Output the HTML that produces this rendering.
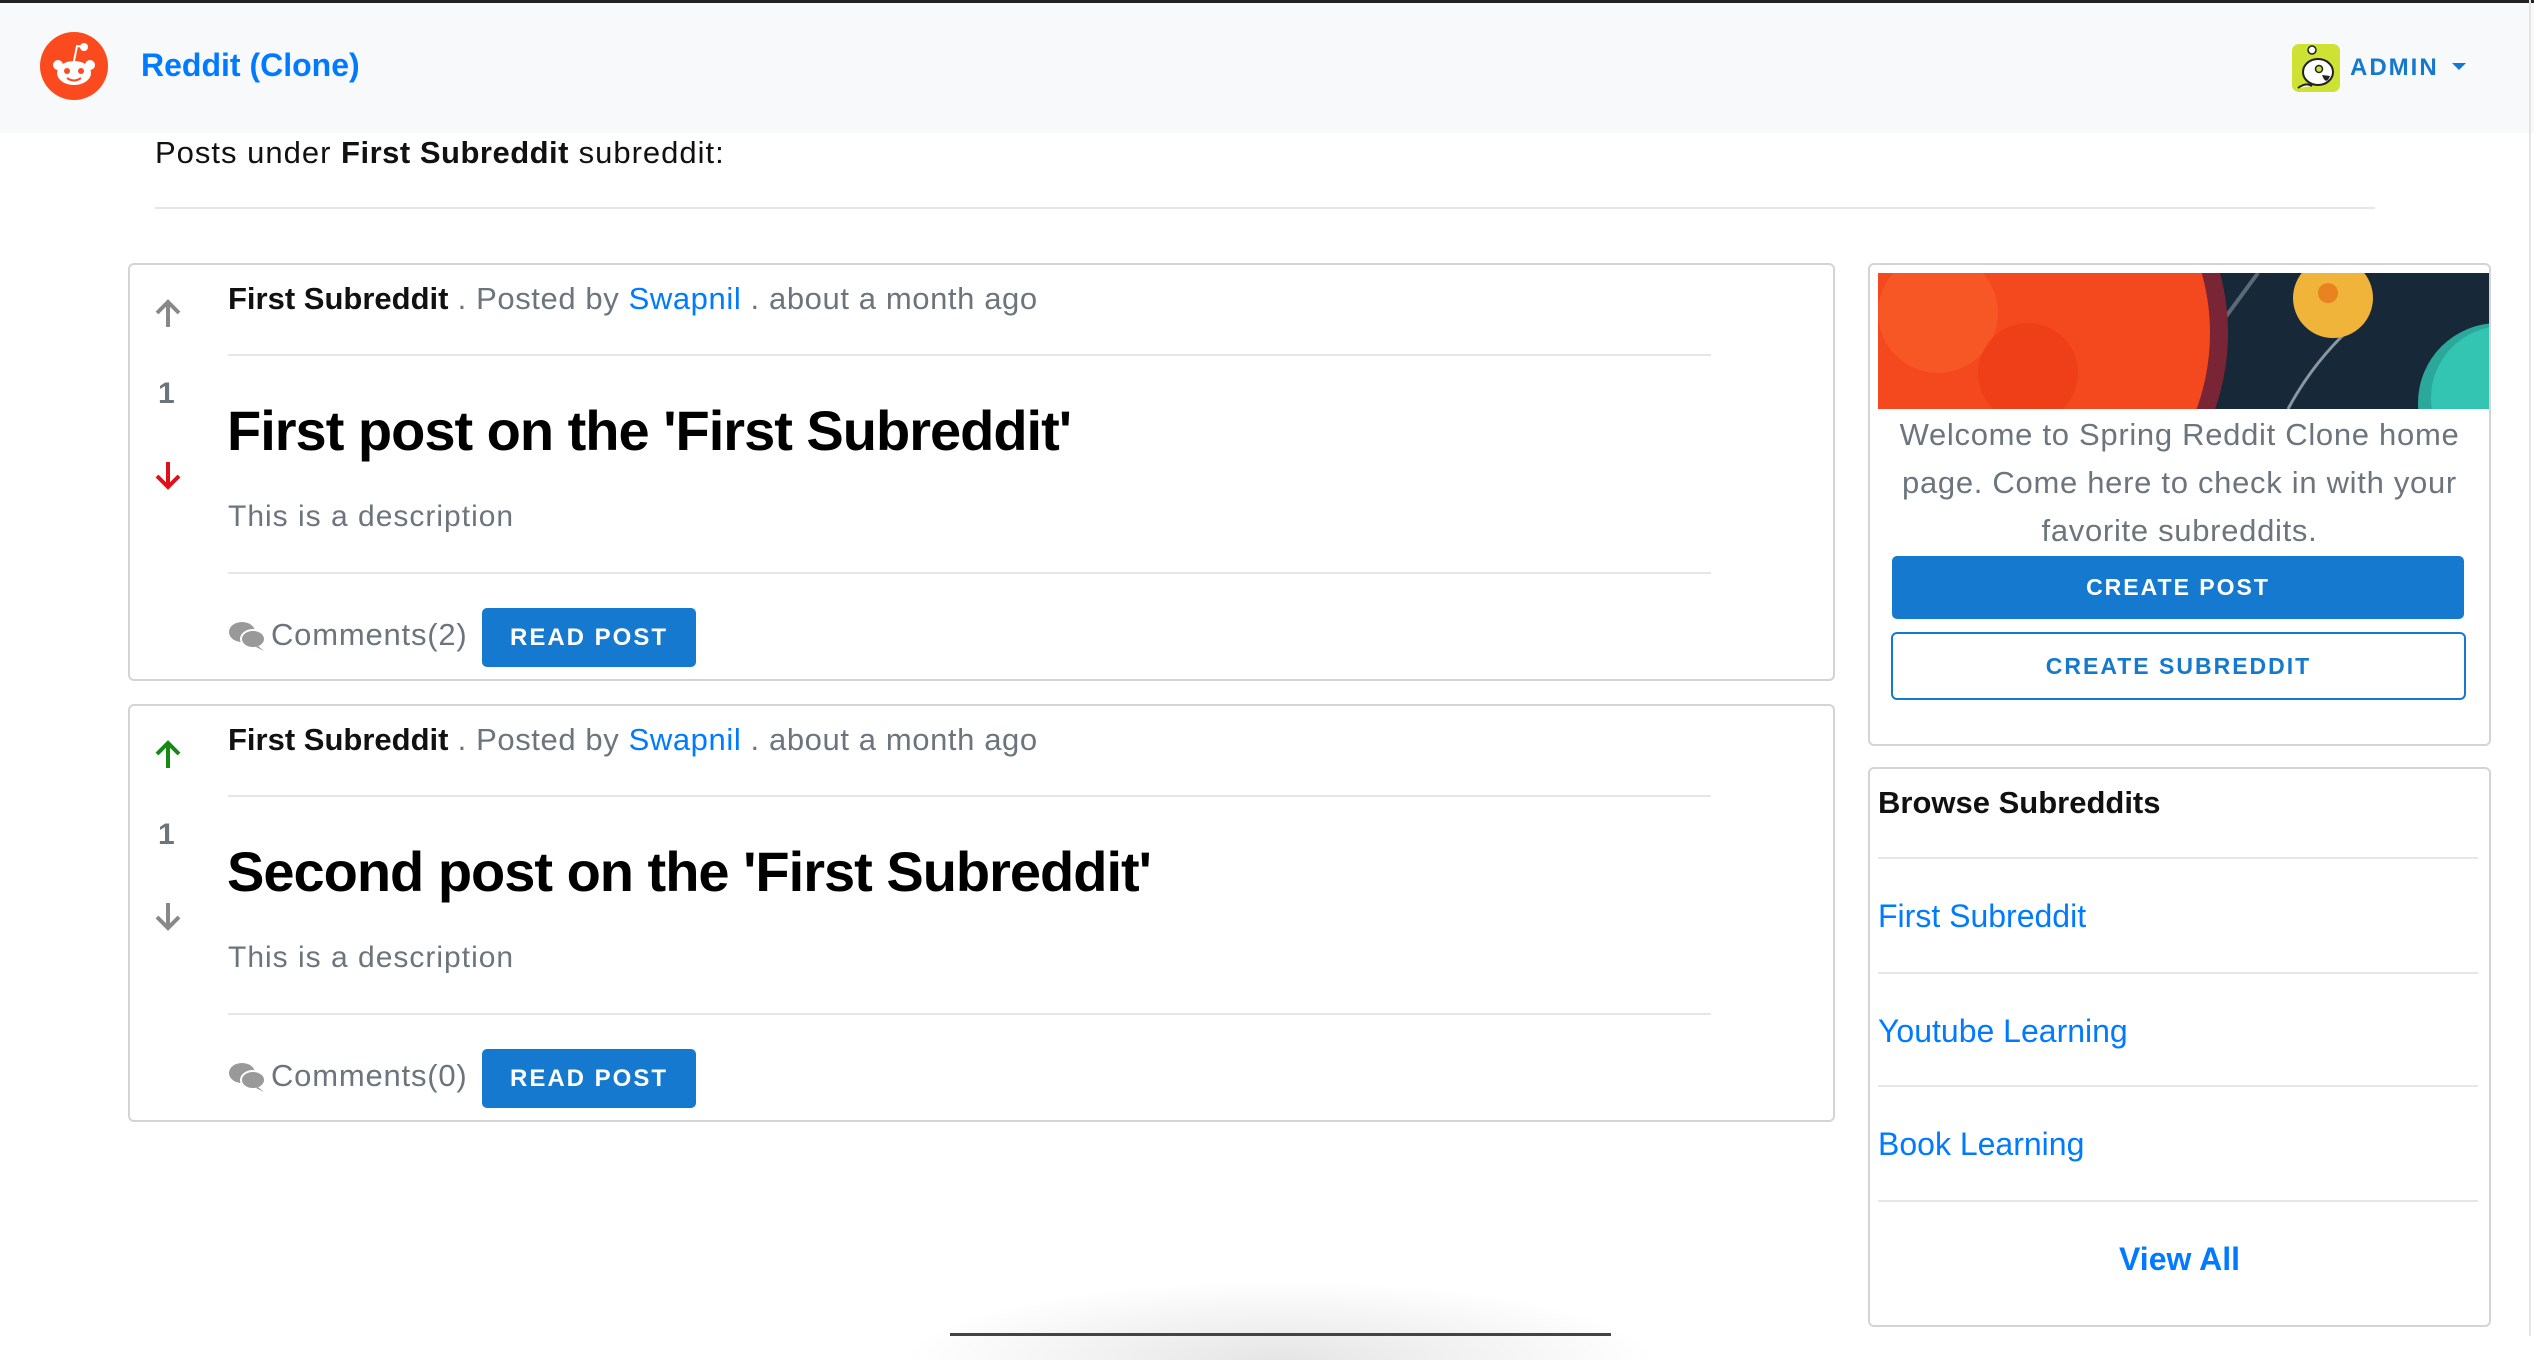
<!DOCTYPE html>
<html><head><meta charset="utf-8"><style>
*{margin:0;padding:0;box-sizing:border-box}
body{width:2534px;height:1336px;overflow:hidden;background:#fff;font-family:"Liberation Sans",Arial,sans-serif;position:relative}
.a{position:absolute;white-space:nowrap}
.nav{left:0;top:0;width:2534px;height:133px;background:#f8f9fa;border-top:3px solid #222}
.card{border:2px solid #d4d4d4;border-radius:6px;background:#fff}
.hr{height:2px;background:#e6e6e6}
.meta{font-size:31px;line-height:40px;color:#6c757d;letter-spacing:0.6px}
.meta b{color:#111;letter-spacing:0}
.blue{color:#007bff}
.title{font-size:56px;font-weight:bold;color:#000;line-height:64px;letter-spacing:-1px}
.desc{font-size:30px;line-height:40px;color:#6c757d;letter-spacing:1px}
.btn{background:#1479cf;color:#fff;font-weight:bold;font-size:24px;letter-spacing:2px;border-radius:5px;text-align:center}
.cm{font-size:31px;line-height:40px;color:#6c757d;letter-spacing:0.8px}
.link{font-size:32px;line-height:40px;color:#007bff}
.vote{font-size:30px;line-height:36px;color:#6c757d;font-weight:bold}
</style></head><body>
<div class="a nav"></div>
<svg class="a" style="left:40px;top:32px" width="68" height="68" viewBox="0 0 68 68">
<circle cx="34" cy="34" r="34" fill="#fb4b1e"/>
<ellipse cx="34" cy="41" rx="17" ry="12" fill="#fff"/>
<circle cx="18" cy="33" r="5" fill="#fff"/><circle cx="50" cy="33" r="5" fill="#fff"/>
<circle cx="44" cy="15" r="4" fill="#fff"/>
<path d="M34 29 L37 14 L44 15" stroke="#fff" stroke-width="2" fill="none"/>
<circle cx="27" cy="39" r="3" fill="#fb4b1e"/><circle cx="41" cy="39" r="3" fill="#fb4b1e"/>
<path d="M27 46 Q34 51 41 46" stroke="#fb4b1e" stroke-width="2" fill="none"/>
</svg>
<div class="a" style="left:141px;top:45px;font-size:32px;line-height:40px;font-weight:bold;color:#007bff">Reddit (Clone)</div>
<svg class="a" style="left:2292px;top:44px" width="48" height="48" viewBox="0 0 48 48">
<rect width="48" height="48" rx="7" fill="#cee234"/>
<ellipse cx="26" cy="28" rx="15" ry="13" fill="#fff" stroke="#222" stroke-width="2"/>
<circle cx="20" cy="6" r="4" fill="#fff" stroke="#222" stroke-width="1.5"/>
<circle cx="27" cy="25" r="3.5" fill="#cee234" stroke="#222" stroke-width="1.5"/>
<path d="M30 31 Q34 42 38 32 Z" fill="#222"/>
<path d="M6 44 Q14 38 20 42" stroke="#222" stroke-width="2" fill="#fff"/>
</svg>
<div class="a" style="left:2350px;top:52px;font-size:24px;line-height:32px;font-weight:bold;color:#1479cf;letter-spacing:2px">ADMIN</div>
<div class="a" style="left:2452px;top:63px;width:0;height:0;border-left:7px solid transparent;border-right:7px solid transparent;border-top:7px solid #1479cf"></div>
<div class="a" style="left:2529px;top:0;width:2px;height:1336px;background:#e4e4e4"></div>

<div class="a" style="left:155px;top:135px;font-size:31px;line-height:36px;color:#111;letter-spacing:1px">Posts under <b style="letter-spacing:0.5px">First Subreddit</b> subreddit:</div>
<div class="a hr" style="left:155px;top:207px;width:2220px"></div>

<!-- post 1 -->
<div class="a card" style="left:128px;top:263px;width:1707px;height:418px"></div>
<svg class="a" style="left:154px;top:299px" width="28" height="30" viewBox="0 0 28 30"><path d="M14 28 V3 M3 14 L14 3 L25 14" stroke="#888" stroke-width="4" fill="none"/></svg>
<div class="a vote" style="left:158px;top:376px">1</div>
<svg class="a" style="left:154px;top:460px" width="28" height="30" viewBox="0 0 28 30"><path d="M14 2 V27 M3 16 L14 27 L25 16" stroke="#e0101a" stroke-width="4" fill="none"/></svg>
<div class="a meta" style="left:228px;top:279px"><b>First Subreddit</b> . Posted by <span class="blue">Swapnil</span> . about a month ago</div>
<div class="a hr" style="left:228px;top:354px;width:1483px"></div>
<div class="a title" style="left:227px;top:399px">First post on the 'First Subreddit'</div>
<div class="a desc" style="left:228px;top:497px">This is a description</div>
<div class="a hr" style="left:228px;top:572px;width:1483px"></div>
<svg class="a" style="left:228px;top:620px" width="38" height="32" viewBox="0 0 38 32"><ellipse cx="14" cy="12" rx="13" ry="10" fill="#999"/><ellipse cx="25" cy="19" rx="12" ry="9" fill="#999" stroke="#fff" stroke-width="2"/><path d="M30 26 L36 31 L28 27Z" fill="#999"/></svg>
<div class="a cm" style="left:271px;top:615px">Comments(2)</div>
<div class="a btn" style="left:482px;top:608px;width:214px;height:59px;line-height:59px">READ POST</div>

<!-- post 2 -->
<div class="a card" style="left:128px;top:704px;width:1707px;height:418px"></div>
<svg class="a" style="left:154px;top:740px" width="28" height="30" viewBox="0 0 28 30"><path d="M14 28 V3 M3 14 L14 3 L25 14" stroke="#138a13" stroke-width="4" fill="none"/></svg>
<div class="a vote" style="left:158px;top:817px">1</div>
<svg class="a" style="left:154px;top:901px" width="28" height="30" viewBox="0 0 28 30"><path d="M14 2 V27 M3 16 L14 27 L25 16" stroke="#888" stroke-width="4" fill="none"/></svg>
<div class="a meta" style="left:228px;top:720px"><b>First Subreddit</b> . Posted by <span class="blue">Swapnil</span> . about a month ago</div>
<div class="a hr" style="left:228px;top:795px;width:1483px"></div>
<div class="a title" style="left:227px;top:840px">Second post on the 'First Subreddit'</div>
<div class="a desc" style="left:228px;top:938px">This is a description</div>
<div class="a hr" style="left:228px;top:1013px;width:1483px"></div>
<svg class="a" style="left:228px;top:1061px" width="38" height="32" viewBox="0 0 38 32"><ellipse cx="14" cy="12" rx="13" ry="10" fill="#999"/><ellipse cx="25" cy="19" rx="12" ry="9" fill="#999" stroke="#fff" stroke-width="2"/><path d="M30 26 L36 31 L28 27Z" fill="#999"/></svg>
<div class="a cm" style="left:271px;top:1056px">Comments(0)</div>
<div class="a btn" style="left:482px;top:1049px;width:214px;height:59px;line-height:59px">READ POST</div>

<!-- sidebar 1 -->
<div class="a card" style="left:1868px;top:263px;width:623px;height:483px"></div>
<svg class="a" style="left:1878px;top:273px" width="611" height="136" viewBox="0 0 611 136">
<rect width="611" height="136" fill="#172838"/>
<path d="M250 136 L330 0" stroke="#8a97a3" stroke-width="4"/>
<path d="M280 136 L380 0" stroke="#8a97a3" stroke-width="4" opacity=".6"/>
<path d="M410 136 Q440 80 490 40" stroke="#8a97a3" stroke-width="3" fill="none"/>
<circle cx="120" cy="60" r="230" fill="#7a2536"/>
<circle cx="110" cy="60" r="222" fill="#f4481e"/>
<circle cx="60" cy="40" r="60" fill="#f8612a" opacity=".6"/>
<circle cx="150" cy="100" r="50" fill="#e93a16" opacity=".6"/>
<circle cx="455" cy="25" r="40" fill="#f0b43a"/>
<circle cx="450" cy="20" r="10" fill="#e98220"/>
<circle cx="620" cy="130" r="80" fill="#2aa89c"/>
<circle cx="625" cy="125" r="72" fill="#33c4b2"/>
</svg>
<div class="a" style="left:1868px;top:411px;width:623px;text-align:center;font-size:31px;line-height:48px;color:#6c757d;letter-spacing:0.7px">Welcome to Spring Reddit Clone home<br>page. Come here to check in with your<br>favorite subreddits.</div>
<div class="a btn" style="left:1892px;top:556px;width:572px;height:63px;line-height:63px;font-size:23px">CREATE POST</div>
<div class="a" style="left:1891px;top:632px;width:575px;height:68px;line-height:64px;border:2px solid #1479cf;border-radius:6px;text-align:center;color:#1479cf;font-weight:bold;font-size:23px;letter-spacing:2px">CREATE SUBREDDIT</div>

<!-- sidebar 2 -->
<div class="a card" style="left:1868px;top:767px;width:623px;height:560px"></div>
<div class="a" style="left:1878px;top:783px;font-size:31px;line-height:40px;font-weight:bold;color:#111">Browse Subreddits</div>
<div class="a hr" style="left:1878px;top:857px;width:600px"></div>
<div class="a link" style="left:1878px;top:896px">First Subreddit</div>
<div class="a hr" style="left:1878px;top:972px;width:600px"></div>
<div class="a link" style="left:1878px;top:1011px">Youtube Learning</div>
<div class="a hr" style="left:1878px;top:1085px;width:600px"></div>
<div class="a link" style="left:1878px;top:1124px">Book Learning</div>
<div class="a hr" style="left:1878px;top:1200px;width:600px"></div>
<div class="a link" style="left:1868px;top:1239px;width:623px;text-align:center;font-weight:bold">View All</div>

<div class="a" style="left:900px;top:1280px;width:760px;height:80px;background:radial-gradient(ellipse at center bottom,rgba(0,0,0,.1),rgba(0,0,0,0) 70%)"></div>
<div class="a" style="left:950px;top:1333px;width:661px;height:3px;background:#444"></div>
</body></html>
